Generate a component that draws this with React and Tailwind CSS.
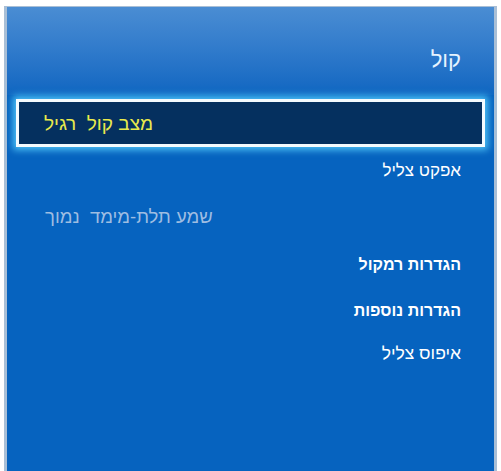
export default function App() {
  const rows = [
    { label: "אפקט צליל", h: "h-[46px]", cls: "text-white text-[17px]" },
    { label: "שמע תלת-מימד  נמוך", h: "h-[49px]", cls: "text-[#9ebde2] text-[18.5px]", left: true },
    { label: "הגדרות רמקול", h: "h-[46px]", cls: "text-white font-bold text-[16px]" },
    { label: "הגדרות נוספות", h: "h-[46px]", cls: "text-white font-bold text-[16px]" },
    { label: "איפוס צליל", h: "h-[40px]", cls: "text-white text-[17.5px]" },
  ];

  return (
    <div className="w-[501px] h-[471px] bg-white pt-[6px] pl-[4px] overflow-hidden font-['Liberation_Sans','DejaVu_Sans',sans-serif]">
      <div className="w-[493px] h-[465px] border-x-[3px] border-t border-[#a9bfd6] bg-[#0663bf] flex flex-col">
        {/* header */}
        <div
          dir="rtl"
          className="h-[88px] shrink-0 flex items-center pr-[33px] pt-[18px] bg-gradient-to-b from-[#4a8dd3] via-[#2f7acb] to-[#0e66c1]"
        >
          <span className="text-[22px] text-[#e6f3ff] leading-none">קול</span>
        </div>

        {/* selected item */}
        <div className="px-[9px] pt-[4px] shrink-0">
          <div className="h-[48px] border-[3px] border-[#f4fbff] bg-[#05305f] shadow-[0_0_7px_3px_rgba(90,210,255,0.85)] flex items-center pl-[25px]">
            <span dir="rtl" className="text-[19px] text-[#e9ea4c] leading-none whitespace-pre">מצב קול  רגיל</span>
          </div>
        </div>

        {/* list */}
        <div dir="rtl" className="flex flex-col">
          {rows.map((r) => (
            <div
              key={r.label}
              className={`${r.h} flex items-center ${r.left ? "justify-end pl-[38px]" : "pr-[33px]"}`}
            >
              <span className={`leading-none whitespace-pre ${r.cls}`}>{r.label}</span>
            </div>
          ))}
        </div>
      </div>
    </div>
  );
}
